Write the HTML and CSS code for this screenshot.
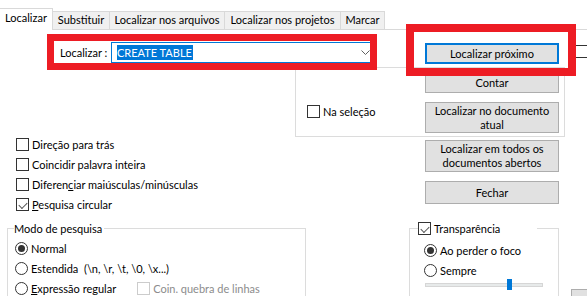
FILE: index.html
```html
<!DOCTYPE html>
<html lang="pt">
<head>
    <meta charset="UTF-8">
    <title>Localizar</title>
    <link rel="stylesheet" href="styles.css">
</head>
<body>
    <div class="dialog">
        <div class="tabs">
            <div class="tab active tab-find">Localizar</div>
            <div class="tab tab-replace">Substituir</div>
            <div class="tab tab-files">Localizar nos arquivos</div>
            <div class="tab tab-projects">Localizar nos projetos</div>
            <div class="tab tab-mark">Marcar</div>
        </div>

        <div class="find-row">
            <label class="find-label">Localizar :</label>
            <div class="combo">
                <span class="selected">CREATE TABLE</span>
                <svg class="chevron" width="9" height="5" viewBox="0 0 9 5">
                    <path d="M0.5 0.5 L4.5 4.5 L8.5 0.5" fill="none" stroke="#606060" stroke-width="1"/>
                </svg>
            </div>
            <button class="btn btn-default">Localizar próximo</button>
            <span class="box edge-box"></span>
        </div>

        <div class="scope-frame">
            <label class="check na-selecao"><span class="box"></span><span>Na seleção</span></label>
            <div class="btn-col">
                <button class="btn">Contar</button>
                <button class="btn btn-doc">Localizar no documento<br>atual</button>
            </div>
        </div>

        <div class="options-row">
            <div class="check-list">
                <label class="check"><span class="box"></span><span>Direção para trás</span></label>
                <label class="check"><span class="box"></span><span>Coincidir palavra inteira</span></label>
                <label class="check"><span class="box"></span><span>Diferen<u>c</u>iar maiúsculas/minúsculas</span></label>
                <label class="check"><span class="box checked"></span><span><u>P</u>esquisa circular</span></label>
            </div>
            <div class="btn-col btn-col-low">
                <button class="btn btn-all">Localizar em todos os<br>documentos abertos</button>
                <button class="btn btn-close">Fechar</button>
            </div>
        </div>

        <div class="bottom-row">
            <fieldset class="group mode">
                <legend>Modo de pesquisa</legend>
                <label class="radio"><span class="dot on"></span><span>Normal</span></label>
                <label class="radio"><span class="dot"></span><span>Estendida&nbsp; (\n, \r, \t, \0, \x...)</span></label>
                <label class="radio"><span class="dot"></span><span><u>E</u>xpressão regular</span>
                    <span class="check disabled"><span class="box"></span><span>Coin. quebra de linhas</span></span>
                </label>
            </fieldset>
            <fieldset class="group transp">
                <legend><label class="check"><span class="box checked"></span><span>Transparência</span></label></legend>
                <label class="radio"><span class="dot on"></span><span>Ao perder o foco</span></label>
                <label class="radio"><span class="dot"></span><span>Sempre</span></label>
                <div class="slider"><span class="thumb"></span></div>
            </fieldset>
            <button class="btn stub"></button>
        </div>
    </div>

    <!-- annotation boxes drawn over the screenshot -->
    <div class="mark mark-find"></div>
    <div class="mark mark-next"></div>
</body>
</html>
```

FILE: styles.css
```css
* {
    margin: 0;
    padding: 0;
    box-sizing: border-box;
}

body {
    font-family: Lato, "Liberation Sans", sans-serif;
    font-size: 11px;
    line-height: 15px;
    color: #000;
    background: #fff;
    width: 587px;
    height: 296px;
    overflow: hidden;
    position: relative;
}

.dialog {
    height: 296px;
    overflow: hidden;
}

u {
    text-decoration: underline;
    text-underline-offset: 1px;
}

/* tabs */
.tabs {
    display: flex;
    align-items: flex-end;
    height: 30px;
    border-bottom: 1px solid #d9d9d9;
}

.tab {
    height: 18px;
    background: #f0f0f0;
    border-top: 1px solid #d9d9d9;
    border-right: 1px solid #d9d9d9;
    text-align: center;
    line-height: 16px;
    white-space: nowrap;
    flex-shrink: 0;
}

.tab.active {
    height: 22px;
    margin-bottom: -1px;
    margin-left: -1px;
    background: #fff;
    line-height: 18px;
    text-align: left;
    padding-left: 6px;
}

.tab-find { width: 54px; }
.tab-replace { width: 57px; }
.tab-files { width: 115px; }
.tab-projects { width: 116px; }
.tab-mark { width: 44px; }

/* find row */
.find-row {
    display: flex;
    align-items: flex-start;
    height: 22px;
    margin-top: 12px;
    padding-left: 60px;
}

.find-label {
    width: 51px;
    line-height: 21px;
    white-space: nowrap;
    flex-shrink: 0;
}

.combo {
    width: 262px;
    height: 21px;
    border: 1px solid #0078d7;
    display: flex;
    align-items: center;
    padding-left: 5px;
    flex-shrink: 0;
}

.selected {
    background: #0078d7;
    color: #fff;
    line-height: 15px;
    padding-right: 1px;
}

.chevron {
    margin-left: auto;
    margin-right: 2px;
}

.btn {
    display: block;
    font-family: inherit;
    font-size: 11px;
    line-height: 14px;
    color: #000;
    background: #e1e1e1;
    border: 1px solid #adadad;
    width: 134px;
    height: 21px;
    text-align: center;
    flex-shrink: 0;
}

.btn-default {
    margin-left: 52px;
    margin-top: 1px;
    border: 2px solid #0078d7;
}

.box {
    display: inline-block;
    width: 13px;
    height: 13px;
    border: 1px solid #333;
    background: #fff;
    flex-shrink: 0;
    position: relative;
}

.box.checked::after {
    content: "";
    position: absolute;
    left: 2px;
    top: 0;
    width: 7px;
    height: 4px;
    border-left: 1px solid #555;
    border-bottom: 1px solid #555;
    transform: translate(0, 3px) rotate(-45deg);
}

.edge-box {
    margin-left: 16px;
    margin-top: 3px;
}

/* frame with "Na seleção" */
.scope-frame {
    display: flex;
    margin-top: 3px;
    margin-left: 295px;
    width: 270px;
    height: 70px;
    border: 1px solid #dcdcdc;
    padding: 4px 0 0 11px;
}

.check {
    display: flex;
    align-items: center;
    height: 20px;
    gap: 3px;
    white-space: nowrap;
}

.na-selecao {
    width: 118px;
    margin-top: 29px;
}

.btn-col .btn + .btn {
    margin-top: 9px;
}

.btn-doc {
    height: 31px;
}

/* options */
.options-row {
    display: flex;
}

.check-list {
    width: 425px;
    margin-top: -3px;
    padding-left: 16px;
}

.btn-col-low {
    margin-top: 3px;
}

.btn-all {
    height: 32px;
}

.btn-col .btn-close {
    margin-top: 4px;
    height: 23px;
}

/* group boxes */
.bottom-row {
    display: flex;
    align-items: flex-start;
    margin-top: 7px;
}

.group {
    border: 1px solid #dcdcdc;
    height: 90px;
    flex-shrink: 0;
}

.group legend {
    line-height: 15px;
}

.mode {
    margin-left: 7px;
    width: 299px;
    padding: 2px 0 0 6px;
}

.mode legend {
    padding-right: 2px;
}

.radio {
    display: flex;
    align-items: center;
    height: 20px;
    gap: 3px;
    white-space: nowrap;
}

.mode .radio {
    padding-left: 1px;
}

.dot {
    width: 13px;
    height: 13px;
    border: 1px solid #333;
    border-radius: 50%;
    background: #fff;
    display: flex;
    align-items: center;
    justify-content: center;
    flex-shrink: 0;
}

.dot.on::after {
    content: "";
    width: 7px;
    height: 7px;
    border-radius: 50%;
    background: #333;
}

.check.disabled {
    margin-left: 18px;
    color: #8c8c8c;
}

.check.disabled .box {
    border-color: #cccccc;
}

.transp {
    margin-left: 103px;
    width: 150px;
    padding: 4px 0 0 14px;
}

.transp legend {
    margin-left: -6px;
    width: 119px;
}

.transp legend .check {
    height: 15px;
}

.slider {
    position: relative;
    width: 118px;
    height: 4px;
    margin: 3px 0 0 1px;
    background: #e7eaea;
    border: 1px solid #d6d6d6;
}

.thumb {
    position: absolute;
    left: 81px;
    top: -5px;
    width: 5px;
    height: 11px;
    background: #0078d7;
}

.stub {
    width: 40px;
    height: 22px;
    margin-left: 12px;
    margin-top: 68px;
}

/* red annotation boxes */
.mark {
    position: absolute;
    border: 7px solid #ed1c24;
}

.mark-find {
    left: 47px;
    top: 34px;
    width: 330px;
    height: 36px;
}

.mark-next {
    left: 406px;
    top: 24px;
    width: 170px;
    height: 52px;
    border-width: 8px;
}
```
